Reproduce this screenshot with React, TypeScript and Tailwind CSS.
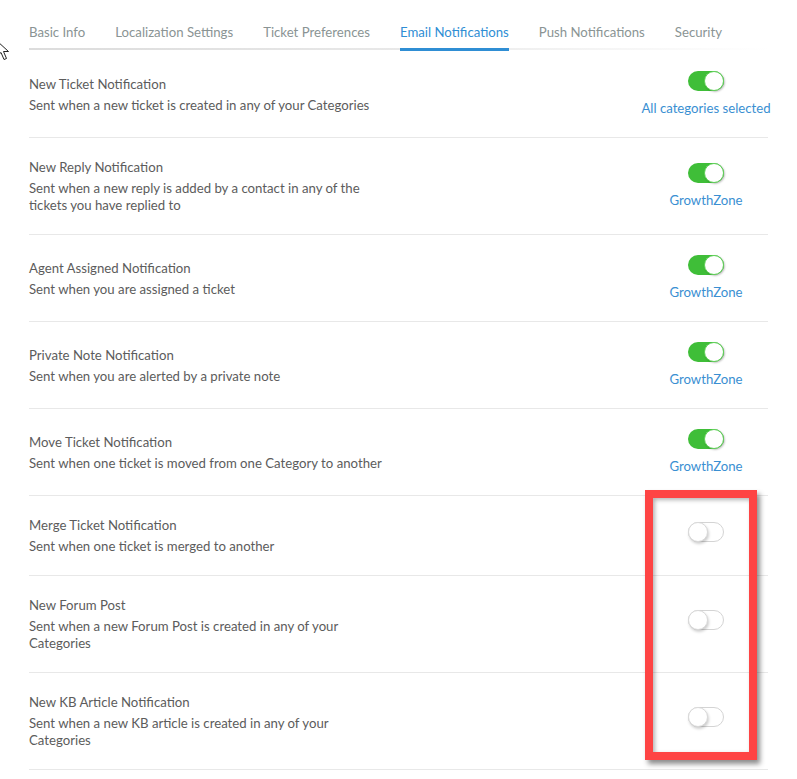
const tabs = [
  'Basic Info',
  'Localization Settings',
  'Ticket Preferences',
  'Email Notifications',
  'Push Notifications',
  'Security',
]

type Row = {
  title: string
  desc: string
  on: boolean
  link?: string
}

const rows: Row[] = [
  { title: 'New Ticket Notification', desc: 'Sent when a new ticket is created in any of your Categories', on: true, link: 'All categories selected' },
  { title: 'New Reply Notification', desc: 'Sent when a new reply is added by a contact in any of the tickets you have replied to', on: true, link: 'GrowthZone' },
  { title: 'Agent Assigned Notification', desc: 'Sent when you are assigned a ticket', on: true, link: 'GrowthZone' },
  { title: 'Private Note Notification', desc: 'Sent when you are alerted by a private note', on: true, link: 'GrowthZone' },
  { title: 'Move Ticket Notification', desc: 'Sent when one ticket is moved from one Category to another', on: true, link: 'GrowthZone' },
  { title: 'Merge Ticket Notification', desc: 'Sent when one ticket is merged to another', on: false },
  { title: 'New Forum Post', desc: 'Sent when a new Forum Post is created in any of your Categories', on: false },
  { title: 'New KB Article Notification', desc: 'Sent when a new KB article is created in any of your Categories', on: false },
]

const Toggle = ({ on }: { on: boolean }) =>
  on ? (
    <div className="relative h-[20px] w-[36px] rounded-full bg-[#3fbe38]">
      <div className="absolute right-0 top-0 h-[20px] w-[20px] rounded-full border border-[#5fd257] bg-white shadow-[1px_1px_2px_rgba(0,0,0,0.25)]" />
    </div>
  ) : (
    <div className="relative h-[20px] w-[36px] rounded-full border border-[#d4d4d4] bg-white">
      <div className="absolute -left-px -top-px h-[20px] w-[20px] rounded-full border border-[#d9d9d9] bg-white shadow-[1px_2px_3px_rgba(0,0,0,0.2)]" />
    </div>
  )

const Cursor = () => (
  <svg className="absolute left-[-4px] top-[40px]" width="18" height="22" viewBox="0 0 18 22">
    <path d="M1 1 L1 16 L5 12.5 L8 19.5 L10.5 18.5 L7.5 11.5 L12.5 11.5 Z" fill="white" stroke="#222" strokeWidth="1" strokeLinejoin="miter" />
  </svg>
)

export default function App() {
  return (
    <div className="relative min-h-[779px] w-[797px] bg-white font-['Lato',sans-serif] text-[13.2px]">
      <Cursor />
      <div className="ml-[29px] w-[739px]">
        {/* tabs */}
        <div className="relative flex gap-[30px] pt-[22px]">
          <div className="absolute bottom-[1px] left-0 h-[2px] w-[740px] bg-gradient-to-r from-[#dcdcdc] via-[#e8e8e8] to-white" />
          {tabs.map((t) => {
            const active = t === 'Email Notifications'
            return (
              <div
                key={t}
                className={
                  'relative whitespace-nowrap pb-[9px] leading-[20px] ' +
                  (active ? 'text-[#2f8ed4]' : 'text-[#8a9494]')
                }
              >
                {t}
                {active && <div className="absolute bottom-0 left-0 h-[3px] w-full bg-[#2f8ed4]" />}
              </div>
            )
          })}
        </div>

        {/* rows */}
        <div>
          {rows.map((r) => (
            <div key={r.title} className="flex items-center justify-between border-b border-[#e8e8e8] py-[20px]">
              <div className="max-w-[362px] text-[#5c5c5c]">
                <div className="leading-[18px]">{r.title}</div>
                <div className="mt-[4px] leading-[17px]">{r.desc}</div>
              </div>
              <div className={'flex w-[124px] flex-col items-center ' + (r.link ? '' : 'mb-[8px]')}>
                <Toggle on={r.on} />
                {r.link && <div className="mt-[8px] whitespace-nowrap leading-[18px] text-[#3a8fd2]">{r.link}</div>}
              </div>
            </div>
          ))}
        </div>
      </div>

      {/* highlight annotation */}
      <div className="absolute left-[645px] top-[490px] h-[270px] w-[112px] border-[8px] border-[#fe4444] shadow-[3px_4px_5px_rgba(0,0,0,0.45),inset_2px_2px_4px_rgba(0,0,0,0.3)]" />
    </div>
  )
}
